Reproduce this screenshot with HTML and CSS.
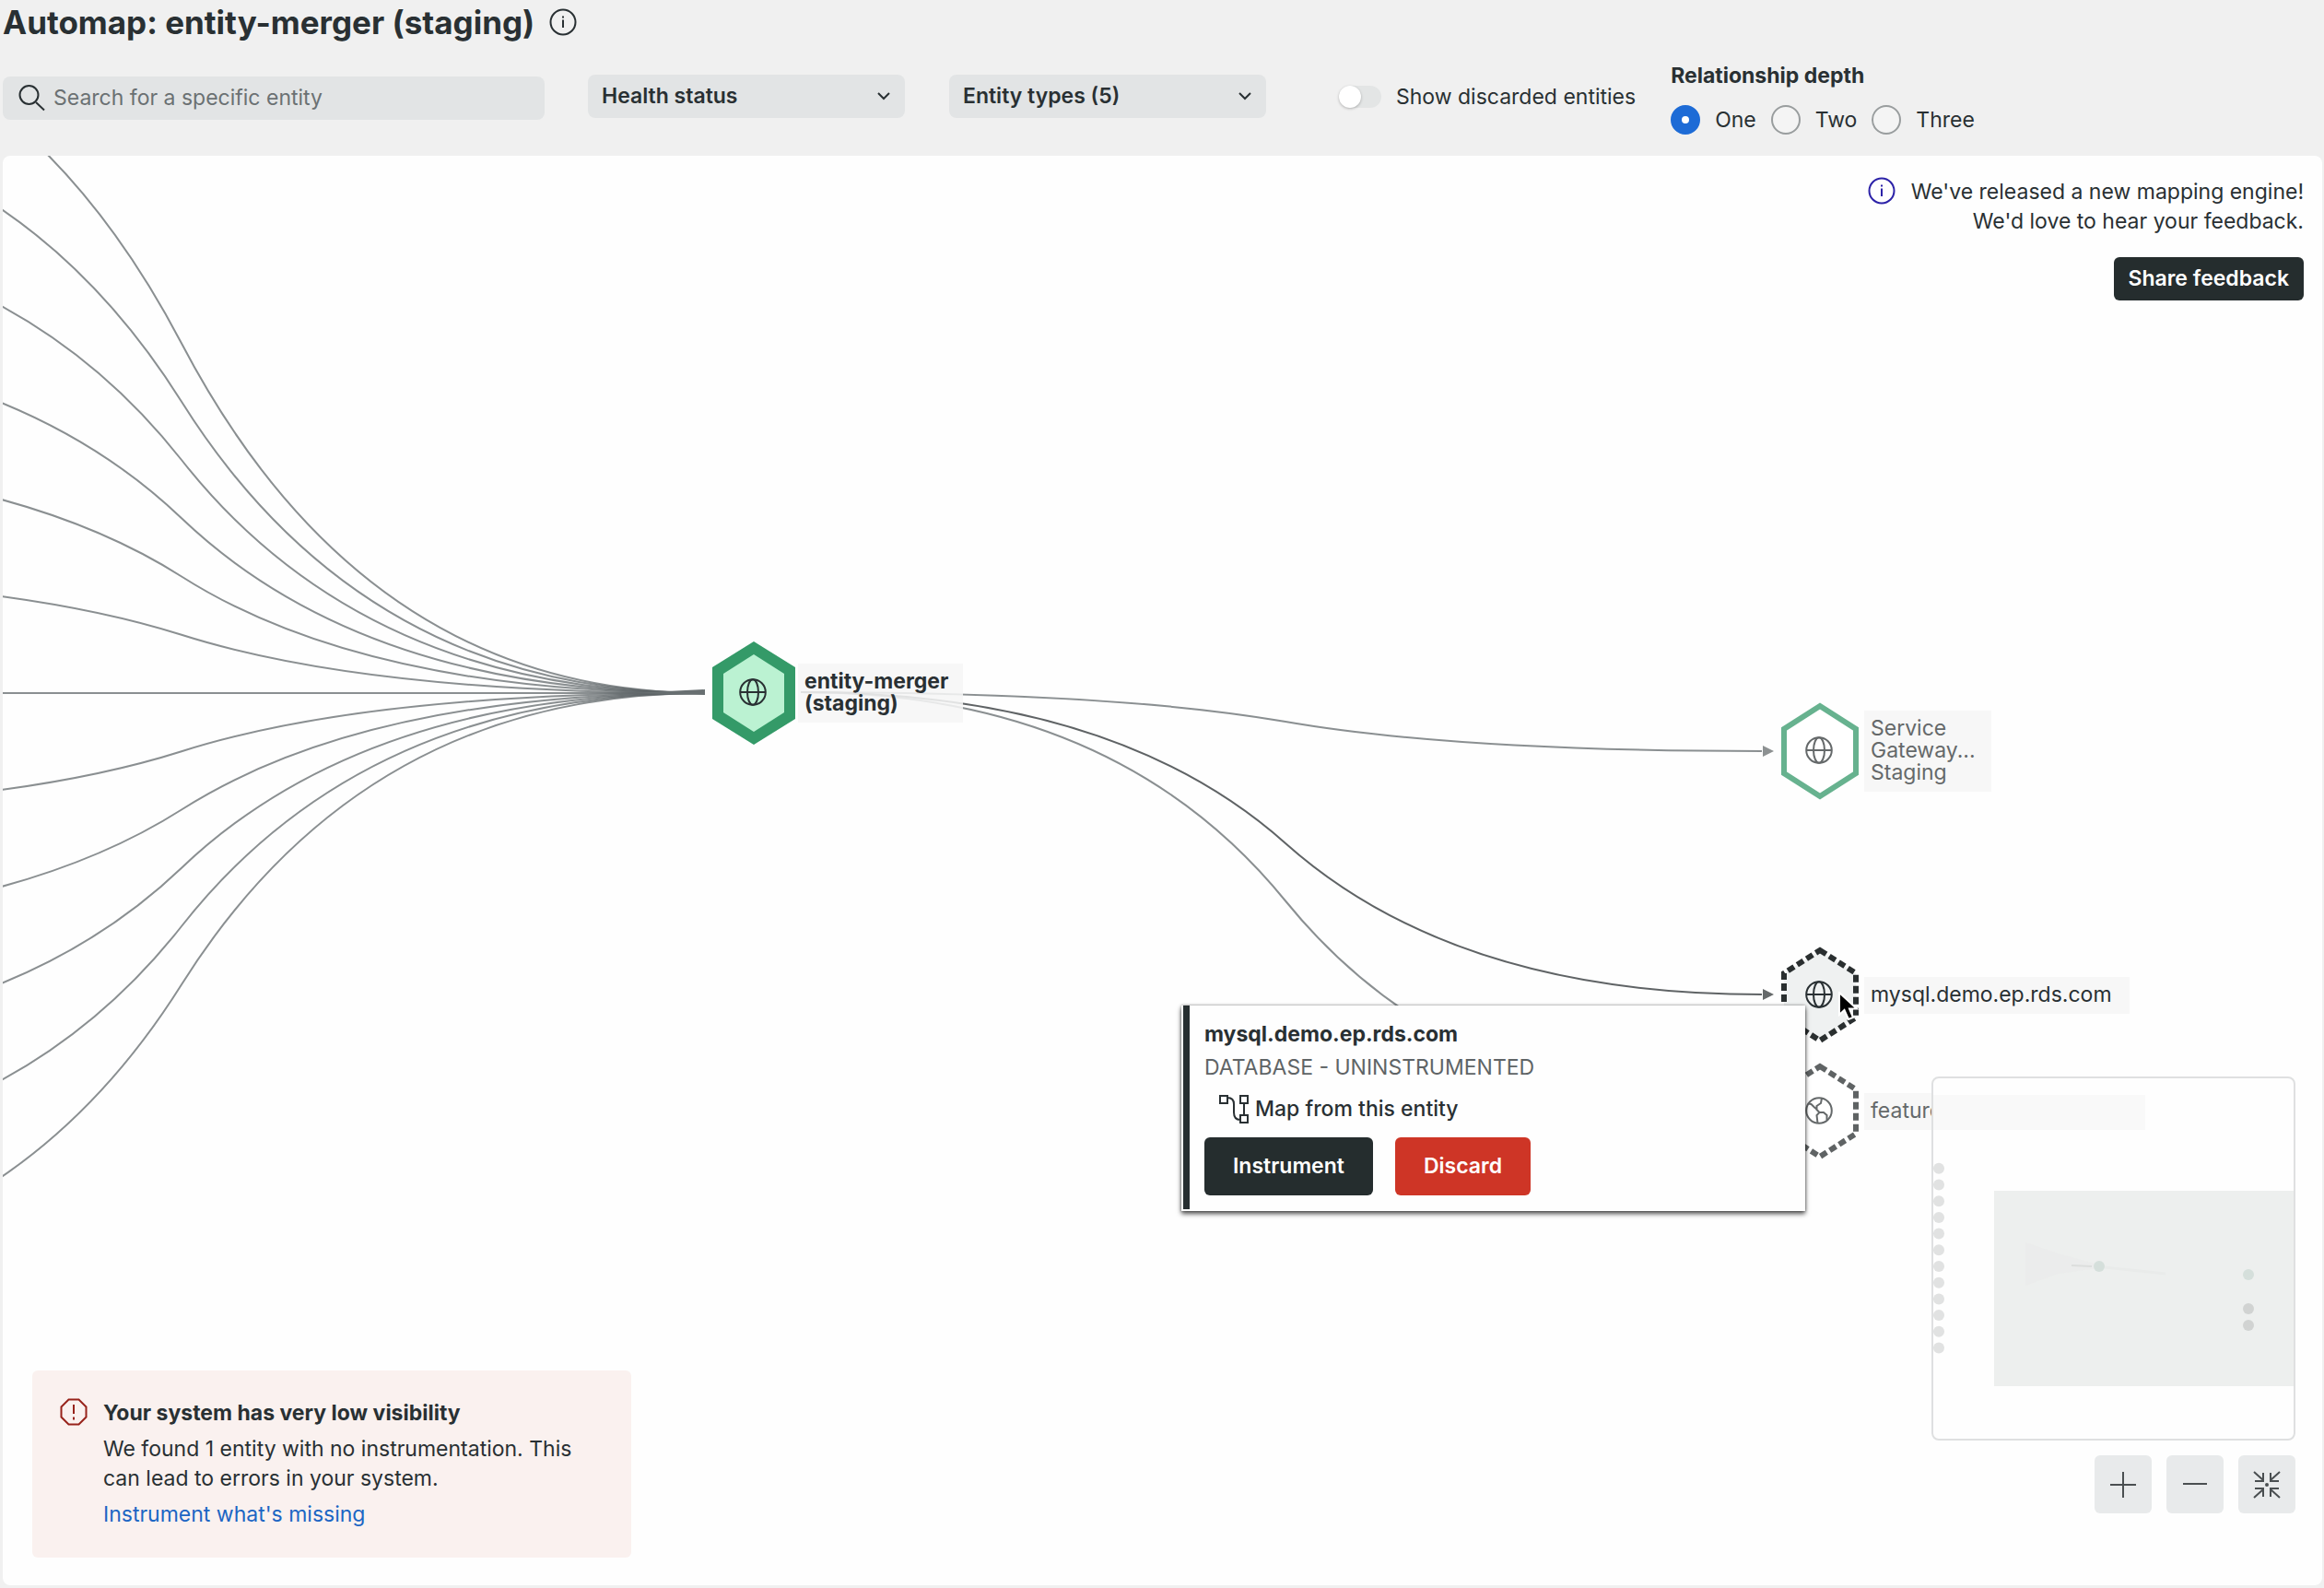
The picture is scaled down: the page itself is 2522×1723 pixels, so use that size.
FILE: index.html
```html
<!DOCTYPE html>
<html lang="en">
<head>
<meta charset="utf-8">
<title>Automap: entity-merger (staging)</title>
<link rel="stylesheet" href="styles.css">
</head>
<body>
<svg class="sprite" aria-hidden="true">
  <symbol id="i-info" viewBox="0 0 30 30"><g fill="none" stroke="currentColor" stroke-width="2"><circle cx="15" cy="15" r="13.5"/><path d="M15 12.5V21M15 8.5V10.5"/></g></symbol>
  <symbol id="i-globe" viewBox="0 0 30 30"><g fill="none" stroke="currentColor" stroke-width="2"><circle cx="15" cy="15" r="13.8"/><ellipse cx="15" cy="15" rx="6" ry="13.8"/><path d="M1 15H29"/></g></symbol>
  <symbol id="i-earth" viewBox="0 0 30 30"><g fill="none" stroke="currentColor" stroke-width="2"><circle cx="15" cy="15" r="13.8"/><path d="M18 1.5L17 7L12.500 10L12.500 14L15.500 17L12.500 20L13.500 28.500M3 7.500L6.500 8L10 11.500L12.500 13.500M15 17H20L23.500 20V25.500"/></g></symbol>
  <symbol id="i-chevron" viewBox="0 0 16 16"><path d="M2 5L8 11L14 5" fill="none" stroke="currentColor" stroke-width="2"/></symbol>
</svg>

<header class="top">
  <h1 class="title">Automap: entity-merger (staging) <svg class="icon"><use href="#i-info"/></svg></h1>
  <form class="filters">
    <label class="search">
      <svg class="search-icon" viewBox="0 0 30 30"><g fill="none" stroke="currentColor" stroke-width="2"><circle cx="11.500" cy="12" r="10"/><path d="M19 20L28 28.500"/></g></svg>
      <input type="search" aria-label="Search entities" placeholder="Search for a specific entity">
    </label>
    <label class="select"><select aria-label="Health status"><option>Health status</option></select><svg class="chevron"><use href="#i-chevron"/></svg></label>
    <label class="select"><select aria-label="Entity types"><option>Entity types (5)</option></select><svg class="chevron"><use href="#i-chevron"/></svg></label>
    <label class="toggle"><input type="checkbox">Show discarded entities</label>
    <fieldset class="depth">
      <legend>Relationship depth</legend>
      <div class="radios">
        <label><input type="radio" name="depth" checked>One</label>
        <label><input type="radio" name="depth">Two</label>
        <label><input type="radio" name="depth">Three</label>
      </div>
    </fieldset>
  </form>
</header>

<main class="canvas">
  <svg class="edges" aria-hidden="true">
    <g id="incoming"></g>
    <path class="edge" d="M866 582Q1208 582 1392 614T1909 646"/>
    <path class="arrow" d="M1910 640L1922 646L1910 652Z"/>
    <path class="edge edge-active" d="M866 582Q1208 582 1392 746T1909 910"/>
    <path class="arrow arrow-active" d="M1910 904L1922 910L1910 916Z"/>
    <path class="edge" d="M866 582Q1208 582 1392 808.500T1909 1035"/>
  </svg>

  <div class="node node-main">
    <svg class="hex" viewBox="0 0 90 112"><path d="M45 0L90 28V84L45 112L0 84V28Z" fill="#349a68"/><path d="M45 14L78 35V77L45 98L12 77V35Z" fill="#bbf2d2"/><use href="#i-globe" x="29" y="40" width="30" height="30"/></svg>
    <span class="node-label">entity-merger<br>(staging)</span>
  </div>
  <div class="node node-service">
    <svg class="hex" viewBox="0 0 90 112"><path d="M45 7L84 32V80L45 105L6 80V32Z" fill="#fff" stroke="#67b28f" stroke-width="6"/><use href="#i-globe" x="29" y="40" width="30" height="30"/></svg>
    <span class="node-label">Service<br>Gateway...<br>Staging</span>
  </div>
  <div class="node node-mysql">
    <svg class="hex" viewBox="0 0 90 112"><path d="M45 7L84 32V80L45 105L6 80V32Z" fill="#eff1f1" stroke="#2a2f30" stroke-width="6" stroke-dasharray="8 4"/><use href="#i-globe" x="29" y="40" width="30" height="30"/></svg>
    <span class="node-label">mysql.demo.ep.rds.com</span>
  </div>
  <div class="node node-feature">
    <svg class="hex" viewBox="0 0 90 112"><path d="M45 7L84 32V80L45 105L6 80V32Z" fill="#fff" stroke="#5f6364" stroke-width="6" stroke-dasharray="8 4"/><use href="#i-earth" x="29" y="40" width="30" height="30"/></svg>
    <span class="node-label">feature</span>
  </div>

  <section class="popover">
    <h2>mysql.demo.ep.rds.com</h2>
    <p>DATABASE - UNINSTRUMENTED</p>
    <button class="map-from" type="button"><svg class="map-icon" viewBox="0 0 32 32"><g fill="none" stroke="currentColor" stroke-width="2"><path d="M1 2H9V10H1ZM23 2H31V10H23ZM23 23H31V31H23ZM27 10V23M9 4Q16 4 16 11V20Q16 28 23 28"/></g></svg>Map from this entity</button>
    <div class="actions">
      <button class="btn btn-dark" type="button">Instrument</button>
      <button class="btn btn-red" type="button">Discard</button>
    </div>
  </section>
  <svg class="cursor" viewBox="0 0 22 32" aria-hidden="true"><path d="M1 1V25L6.500 20L11 30L16 28L12 18.500H20Z" fill="#000" stroke="#fff" stroke-width="2"/></svg>

  <aside class="feedback">
    <div class="feedback-text"><svg class="icon"><use href="#i-info"/></svg><p>We've released a new mapping engine!<br>We'd love to hear your feedback.</p></div>
    <button class="btn btn-dark btn-small" type="button">Share feedback</button>
  </aside>

  <aside class="alert">
    <svg class="icon" viewBox="0 0 30 30"><path d="M9.500 1.500H20.500L28.500 9.500V20.500L20.500 28.500H9.500L1.500 20.500V9.500ZM15 7V17M15 20.500V23.500" fill="none" stroke="currentColor" stroke-width="2"/></svg>
    <div class="alert-body">
      <h2>Your system has very low visibility</h2>
      <p>We found 1 entity with no instrumentation. This can lead to errors in your system.</p>
      <a href="#">Instrument what's missing</a>
    </div>
  </aside>

  <div class="controls">
    <svg class="minimap" viewBox="0 0 391 391" aria-label="Minimap">
      <rect x="0" y="18" width="230" height="38" fill="#f9f9f9"/>
      <rect x="66" y="122" width="325" height="212" fill="#edefee"/>
      <path d="M100 178L135 190L178 202V206L135 212L100 225Z" fill="#e9e9e9" opacity=".5"/>
      <path d="M150 203L172 204" stroke="#dcdedd" stroke-width="2"/>
      <path d="M186 205L252 212" stroke="#e9ebea" stroke-width="3"/>
      <g id="mini-dots" fill="#e1e2e2"></g>
      <g fill="#d5dfdb"><circle cx="180" cy="204" r="6"/><circle cx="342" cy="213" r="6"/></g>
      <g fill="#d1d3d2"><circle cx="342" cy="250" r="6"/><circle cx="342" cy="268" r="6"/></g>
    </svg>
    <div class="zoom">
      <button type="button" aria-label="Zoom in"><svg viewBox="0 0 30 30"><path d="M1 15H29M15 1V29"/></svg></button>
      <button type="button" aria-label="Zoom out"><svg viewBox="0 0 30 30"><path d="M2 14H28"/></svg></button>
      <button type="button" aria-label="Fit to view"><svg viewBox="0 0 30 30"><path d="M1 1L11 10M2 11H11V2M29 1L19 10M28 11H19V2M1 29L11 20M2 19H11V28M29 29L19 20M28 19H19V28"/><circle cx="15" cy="15" r="1"/></svg></button>
    </div>
  </div>
</main>
<script src="map.js"></script>
</body>
</html>
```
FILE: map.js
```js
const NS = 'http://www.w3.org/2000/svg';

function add(parent, tag, attrs) {
  const el = document.createElementNS(NS, tag);
  for (const key in attrs) el.setAttribute(key, attrs[key]);
  parent.appendChild(el);
}

// Twelve upstream entities feed the entity in the middle of the map.
const incoming = document.getElementById('incoming');
const dots = document.getElementById('mini-dots');
const target = { x: 762, y: 583 };
const half = 568;
for (let row = -6; row <= 5; row++) {
  const startX = target.x - 2 * half;
  const startY = target.y + row * 126.5;
  const midY = (target.y + startY) / 2;
  add(incoming, 'path', {
    class: 'edge',
    d: `M${startX} ${startY}Q${startX + half * 0.65} ${startY} ${startX + half} ${midY}T${target.x} ${target.y}`
  });
  add(dots, 'circle', { cx: 6, cy: 204 + row * 17.7, r: 6 });
}
add(incoming, 'path', { d: 'M680 583L762 579V585Z', fill: '#686f71' });
```
FILE: styles.css
```css
* { box-sizing: border-box; }
body {
  margin: 0;
  min-height: 100vh;
  display: flex;
  flex-direction: column;
  padding: 0 2px 3px 3px;
  background: #f0f0f0;
  color: #293033;
  font: 23px/32px Inter, "Liberation Sans", sans-serif;
}
h1, h2, p, fieldset, legend { margin: 0; padding: 0; border: 0; }
button, input, select { font: inherit; color: inherit; border: 0; margin: 0; }
.sprite { position: absolute; width: 0; height: 0; }
.icon { width: 30px; height: 30px; flex: none; }

.top { display: flex; flex-direction: column; gap: 2px; padding-bottom: 23px; }
.title { display: flex; align-items: center; gap: 16px; font-size: 35px; line-height: 48px; font-weight: 700; }
.filters { display: flex; align-items: flex-start; }
.search { position: relative; display: flex; width: 588px; margin: 33px 47px 0 0; }
.search input { width: 100%; height: 47px; padding: 0 16px 2px 55px; border-radius: 8px; background: #e2e4e5; }
.search input::placeholder { color: #6b7173; opacity: 1; }
.search-icon { position: absolute; left: 17px; top: 8px; width: 30px; height: 30px; }
.select { position: relative; display: flex; width: 344px; margin: 31px 48px 0 0; font-weight: 600; }
.select select { appearance: none; width: 100%; height: 47px; padding: 0 15px 2px; border-radius: 8px; background: #e2e4e5; }
.chevron { position: absolute; right: 15px; top: 15px; width: 16px; height: 16px; pointer-events: none; }
.toggle { display: flex; align-items: center; gap: 16px; margin: 39px 38px 0 31px; }
.toggle input { appearance: none; position: relative; width: 46px; height: 24px; border-radius: 12px; background: #e3e5e5; }
.toggle input::before { content: ""; position: absolute; left: 0; top: 0; width: 24px; height: 24px; border-radius: 50%; background: #fff; box-shadow: 0 1px 3px #0004; }
.depth legend { font-weight: 700; padding-top: 16px; }
.radios { display: flex; gap: 16px; padding-top: 16px; }
.radios label { display: flex; align-items: center; gap: 16px; }
.radios input { appearance: none; width: 32px; height: 32px; border: 2px solid #999d9e; border-radius: 50%; background: #f4f4f4; }
.radios input:checked { border: 12px solid #1d6bd6; background: #fff; }

.canvas { position: relative; flex: 1; overflow: hidden; border-radius: 8px; background: #fefefe; }
.edges { position: absolute; inset: 0; width: 100%; height: 100%; }
.edge { fill: none; stroke: #5d6467; stroke-opacity: .72; stroke-width: 2; }
.edge-active { stroke: #2a2f31; stroke-opacity: .75; }
.arrow { fill: #8d9192; }
.arrow-active { fill: #65696a; }

.node { position: absolute; display: flex; align-items: center; gap: 3px; line-height: 24px; }
.hex { width: 90px; height: 112px; flex: none; }
.node-label { padding: 7px 7px 9px; background: #f6f6f6dd; }
.node-main { left: 770px; top: 527px; }
.node-main .node-label { width: 179px; font-weight: 700; }
.node-service { left: 1927px; top: 590px; color: #65696a; }
.node-service .node-label { width: 138px; }
.node-mysql { left: 1927px; top: 855px; }
.node-mysql .node-label { width: 288px; }
.node-feature { left: 1927px; top: 981px; color: #65696a; }
.node-feature .node-label { width: 308px; }

.popover {
  position: absolute; left: 1279px; top: 922px; width: 677px; padding: 15px 17px 17px 25px;
  background: linear-gradient(#262e30, #262e30) 2px 0 / 7px calc(100% - 2px) no-repeat, #fefefe;
  box-shadow: 0 3px 5px #000a, 0 0 3px #0006;
}
.popover h2, .alert h2 { font-size: 23px; font-weight: 700; }
.popover p { color: #5f6466; padding-top: 4px; }
.map-from { display: flex; align-items: center; gap: 7px; margin-top: 9px; padding: 4px 0 4px 16px; background: none; font-weight: 500; }
.map-icon { width: 32px; height: 32px; }
.actions { display: flex; gap: 24px; margin-top: 11px; }
.btn { height: 63px; padding: 0 31px 2px; border-radius: 6px; color: #fff; font-weight: 600; }
.btn-dark { background: #252d2e; }
.btn-red { background: #ce3526; }
.btn-small { height: 47px; padding: 0 16px 2px; }
.cursor { position: absolute; left: 1992px; top: 907px; width: 22px; height: 32px; }

.feedback { position: absolute; right: 20px; top: 23px; display: flex; flex-direction: column; align-items: flex-end; gap: 23px; text-align: right; }
.feedback-text { display: flex; gap: 17px; }
.feedback .icon { color: #2c22a8; }

.alert { position: absolute; left: 32px; bottom: 30px; width: 650px; display: flex; gap: 17px; padding: 30px 30px 31px; border-radius: 6px; background: #faf1ef; }
.alert .icon { color: #97231b; }
.alert-body { display: flex; flex-direction: column; gap: 7px; }
.alert a { color: #1c66c4; text-decoration: none; }

.controls { position: absolute; right: 29px; bottom: 78px; display: flex; flex-direction: column; align-items: flex-end; gap: 16px; }
.minimap { width: 395px; height: 395px; border: 2px solid #dfe0e1; border-radius: 8px; background: #fefefe; }
.zoom { display: flex; gap: 16px; }
.zoom button { display: flex; align-items: center; justify-content: center; width: 62px; height: 63px; padding: 0; border-radius: 6px; background: #e8eaeb; }
.zoom svg { width: 30px; height: 30px; fill: none; stroke: #4a4f51; stroke-width: 2; }
```
